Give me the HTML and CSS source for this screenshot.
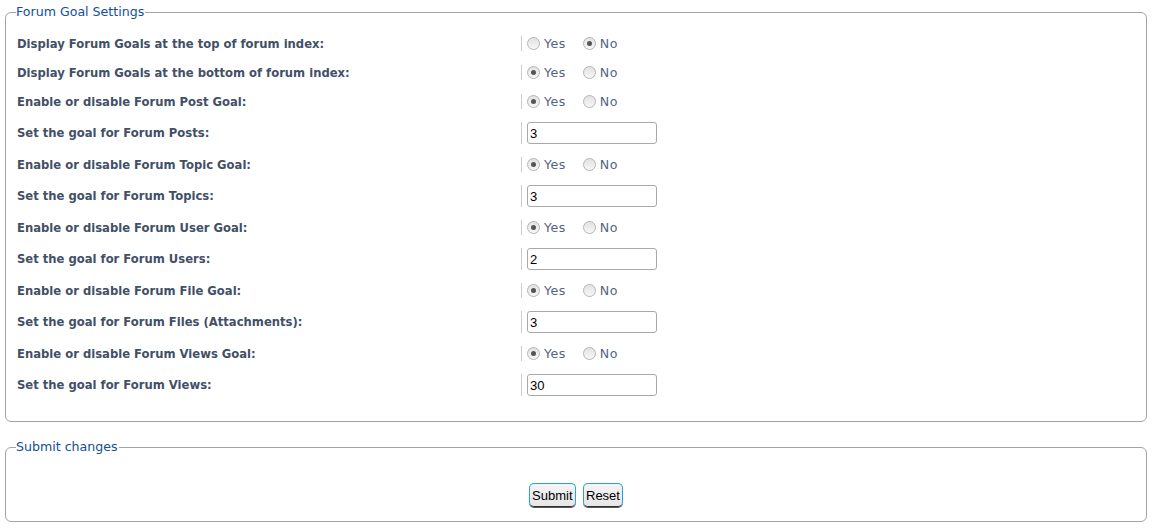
FILE: index.html
```html
<!DOCTYPE html>
<html lang="en">
<head>
    <meta charset="UTF-8">
    <title>Forum Goal Settings</title>
    <link rel="stylesheet" href="styles.css">
</head>
<body>
    <form id="acp_goals">
        <fieldset class="settings">
            <legend>Forum Goal Settings</legend>
            <dl class="row radio-row">
                <dt><label>Display Forum Goals at the top of forum index:</label></dt>
                <dd><label class="opt"><input type="radio" name="top"> Yes</label><label class="opt"><input type="radio" name="top" checked> No</label></dd>
            </dl>
            <dl class="row radio-row">
                <dt><label>Display Forum Goals at the bottom of forum index:</label></dt>
                <dd><label class="opt"><input type="radio" name="bottom" checked> Yes</label><label class="opt"><input type="radio" name="bottom"> No</label></dd>
            </dl>
            <dl class="row radio-row">
                <dt><label>Enable or disable Forum Post Goal:</label></dt>
                <dd><label class="opt"><input type="radio" name="post" checked> Yes</label><label class="opt"><input type="radio" name="post"> No</label></dd>
            </dl>
            <dl class="row text-row">
                <dt><label>Set the goal for Forum Posts:</label></dt>
                <dd><input type="text" class="inputbox" value="3"></dd>
            </dl>
            <dl class="row radio-row">
                <dt><label>Enable or disable Forum Topic Goal:</label></dt>
                <dd><label class="opt"><input type="radio" name="topic" checked> Yes</label><label class="opt"><input type="radio" name="topic"> No</label></dd>
            </dl>
            <dl class="row text-row">
                <dt><label>Set the goal for Forum Topics:</label></dt>
                <dd><input type="text" class="inputbox" value="3"></dd>
            </dl>
            <dl class="row radio-row">
                <dt><label>Enable or disable Forum User Goal:</label></dt>
                <dd><label class="opt"><input type="radio" name="user" checked> Yes</label><label class="opt"><input type="radio" name="user"> No</label></dd>
            </dl>
            <dl class="row text-row">
                <dt><label>Set the goal for Forum Users:</label></dt>
                <dd><input type="text" class="inputbox" value="2"></dd>
            </dl>
            <dl class="row radio-row">
                <dt><label>Enable or disable Forum File Goal:</label></dt>
                <dd><label class="opt"><input type="radio" name="file" checked> Yes</label><label class="opt"><input type="radio" name="file"> No</label></dd>
            </dl>
            <dl class="row text-row">
                <dt><label>Set the goal for Forum Files (Attachments):</label></dt>
                <dd><input type="text" class="inputbox" value="3"></dd>
            </dl>
            <dl class="row radio-row">
                <dt><label>Enable or disable Forum Views Goal:</label></dt>
                <dd><label class="opt"><input type="radio" name="views" checked> Yes</label><label class="opt"><input type="radio" name="views"> No</label></dd>
            </dl>
            <dl class="row text-row">
                <dt><label>Set the goal for Forum Views:</label></dt>
                <dd><input type="text" class="inputbox" value="30"></dd>
            </dl>
        </fieldset>

        <fieldset class="submit-buttons">
            <legend>Submit changes</legend>
            <div class="buttons">
                <input type="submit" class="button1" value="Submit">
                <input type="reset" class="button2" value="Reset">
            </div>
        </fieldset>
    </form>
</body>
</html>
```
FILE: styles.css
```css
*{
    margin: 0;
    padding: 0;
    box-sizing: border-box;
}
body{
    background: #fff;
    padding: 4px 7px 0 5px;
    font-family: "DejaVu Sans", Verdana, sans-serif;
    font-size: 11px;
    color: #536482;
}
fieldset{
    border: 1px solid #a3a3a3;
    border-radius: 6px;
    padding: 0 11px;
}
legend{
    font-size: 12.6px;
    line-height: 16px;
    color: #115098;
    padding: 0 1px 0 0;
    margin-left: -1px;
}
.settings{
    padding-top: 9px;
    padding-bottom: 19px;
}
.row{
    display: grid;
    grid-template-columns: 504px 1fr;
    align-items: center;
}
.radio-row{
    height: 29px;
}
.text-row{
    height: 34px;
}
dt{
    font-weight: bold;
    font-size: 11.6px;
    color: #425067;
}
dd{
    border-left: 1px solid #cccccc;
    padding-left: 5px;
    display: flex;
    align-items: center;
}
.radio-row dd{
    height: 15px;
}
.opt{
    display: inline-flex;
    align-items: center;
    margin-right: 17px;
    font-size: 12.6px;
    letter-spacing: 0.5px;
}
.opt input{
    appearance: none;
    -webkit-appearance: none;
    width: 13px;
    height: 13px;
    margin-right: 4px;
    border: 1px solid #b4b4b4;
    border-radius: 50%;
    background: linear-gradient(#e2e2e2, #f7f7f7);
    position: relative;
}
.opt input:checked::after{
    content: "";
    position: absolute;
    left: 3px;
    top: 3px;
    width: 5px;
    height: 5px;
    border-radius: 50%;
    background: #555;
}
.inputbox{
    width: 130px;
    height: 22px;
    border: 1px solid #a9a9a9;
    border-radius: 3px;
    padding: 0 2px;
    font-family: "Liberation Sans", Arial, sans-serif;
    font-size: 13px;
    color: #000;
    background: #fff;
}
.submit-buttons{
    margin-top: 17px;
    padding-bottom: 14px;
}
.buttons{
    text-align: center;
    padding-top: 28px;
}
.button1, .button2{
    height: 24px;
    padding: 0 2px;
    font-family: "Liberation Sans", Arial, sans-serif;
    font-size: 13px;
    color: #000;
    background: linear-gradient(#f4f4f4, #e6e6e6);
    border: 1px solid #2aa0dc;
    border-bottom-color: #333;
    border-radius: 5px;
    box-shadow: 0 1px 0 #555;
    margin: 0 2px;
}
```
